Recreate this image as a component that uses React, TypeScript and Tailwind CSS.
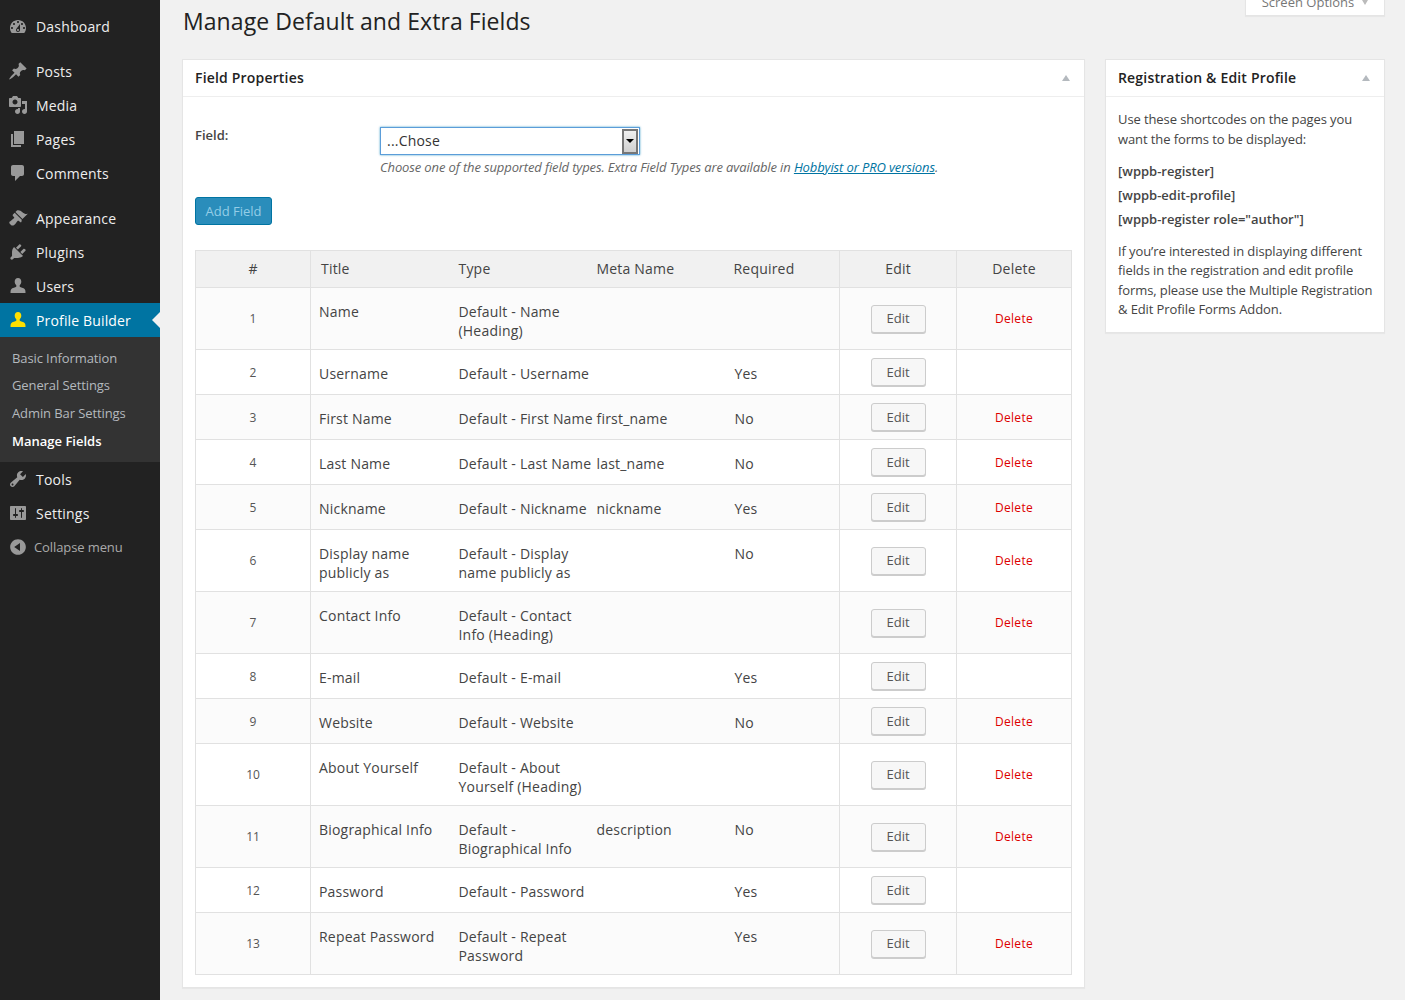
const icons = {
  dashboard:
    'M3.76 16h12.48c1.1-1.37 1.76-3.11 1.76-5 0-4.42-3.58-8-8-8s-8 3.58-8 8c0 1.89.66 3.63 1.76 5zM10 4c.55 0 1 .45 1 1s-.45 1-1 1-1-.45-1-1 .45-1 1-1zM6 6c.55 0 1 .45 1 1s-.45 1-1 1-1-.45-1-1 .45-1 1-1zm8 0c.55 0 1 .45 1 1s-.45 1-1 1-1-.45-1-1 .45-1 1-1zm-5.37 5.55L12 7v6c0 1.1-.9 2-2 2s-2-.9-2-2c0-.57.24-1.08.63-1.45zM4 10c.55 0 1 .45 1 1s-.45 1-1 1-1-.45-1-1 .45-1 1-1zm12 0c.55 0 1 .45 1 1s-.45 1-1 1-1-.45-1-1 .45-1 1-1zm-5 3c0-.55-.45-1-1-1s-1 .45-1 1 .45 1 1 1 1-.45 1-1z',
  posts:
    'M10.44 3.02l1.82-1.82 6.36 6.35-1.83 1.82c-1.05-.68-2.48-.57-3.41.36l-.75.75c-.92.93-1.04 2.35-.35 3.41l-1.83 1.82-2.41-2.41-2.8 2.79c-.42.42-3.38 2.71-3.8 2.29s1.86-3.39 2.28-3.81l2.79-2.79L4.1 9.36l1.83-1.82c1.05.69 2.48.57 3.4-.36l.75-.75c.93-.92 1.05-2.35.36-3.41z',
  media:
    'M13 11V4c0-.55-.45-1-1-1h-1.67L9 1H5L3.67 3H2c-.55 0-1 .45-1 1v7c0 .55.45 1 1 1h10c.55 0 1-.45 1-1zM7 4.5c1.38 0 2.5 1.12 2.5 2.5S8.38 9.5 7 9.5 4.5 8.38 4.5 7 5.62 4.5 7 4.5zM14 6h5v10.5c0 1.38-1.12 2.5-2.5 2.5S14 17.88 14 16.5s1.12-2.5 2.5-2.5c.17 0 .34.02.5.05V9h-3V6zm-4 8.05V13h2v3.5c0 1.38-1.12 2.5-2.5 2.5S7 17.88 7 16.5 8.12 14 9.5 14c.17 0 .34.02.5.05z',
  pages: 'M6 15V2h10v13H6zm-1 1h8v2H3V5h2v11z',
  comments: 'M5 2h9c1.1 0 2 .9 2 2v7c0 1.1-.9 2-2 2h-2l-5 5v-5H5c-1.1 0-2-.9-2-2V4c0-1.1.9-2 2-2z',
  appearance:
    'M14.48 11.06L7.41 3.99l1.5-1.5c.5-.56 2.3-.47 3.51.32 1.21.8 1.43 1.28 2.91 2.1 1.18.64 2.45 1.26 4.45.85zm-.71.71L6.7 4.7 4.93 6.47c-.39.39-.39 1.02 0 1.41l1.06 1.06c.39.39.39 1.03 0 1.42-.6.6-1.43 1.11-2.21 1.69-.35.26-.7.53-1.01.84C1.43 13.23.4 14.4 2.45 16.45c2.05 2.05 3.21 1.03 4.57-.25.31-.31.58-.66.84-1.01.57-.78 1.08-1.61 1.69-2.21.39-.39 1.02-.39 1.41 0l1.06 1.06c.39.39 1.02.39 1.41 0z',
  plugins:
    'M13.11 4.36L9.87 7.6 8 5.73l3.24-3.24c.35-.34 1.05-.2 1.56.32.52.51.66 1.21.31 1.55zm-8 1.77l.91-1.12 9.01 9.01-1.19.84c-.71.71-2.63 1.16-3.82 1.16H6.14L4.9 17.26c-.59.59-1.54.59-2.12 0-.59-.58-.59-1.53 0-2.12l1.24-1.24v-3.88c0-1.13.4-3.19 1.09-3.89zm7.26 3.97l3.24-3.24c.34-.35 1.04-.21 1.55.31.52.51.66 1.21.31 1.55l-3.24 3.25z',
  users:
    'M10 2c2.1 0 3.3 1.6 3.3 3.6 0 1.6-.7 2.9-1.6 3.7v1.3c0 .7 3 1 4.6 2.1 1 .7 1.2 2 1.2 4.3H2.5c0-2.3.2-3.6 1.2-4.3 1.6-1.1 4.6-1.4 4.6-2.1V9.3c-.9-.8-1.6-2.1-1.6-3.7C6.7 3.6 7.9 2 10 2z',
  tools:
    'M16.68 9.77c-1.34 1.34-3.3 1.67-4.95.99l-5.41 6.52c-.99.99-2.59.99-3.58 0s-.99-2.59 0-3.57l6.52-5.42c-.68-1.65-.35-3.61.99-4.95 1.28-1.28 3.12-1.62 4.72-1.06l-2.89 2.89 2.82 2.82 2.86-2.87c.53 1.58.18 3.39-1.08 4.65zM3.81 16.21c.4.39 1.04.39 1.43 0 .4-.4.4-1.04 0-1.43-.39-.4-1.03-.4-1.43 0-.39.39-.39 1.03 0 1.43z',
  settings:
    'M18 16V4c0-.55-.45-1-1-1H3c-.55 0-1 .45-1 1v12c0 .55.45 1 1 1h14c.55 0 1-.45 1-1zM8 11h1c.55 0 1 .45 1 1s-.45 1-1 1H8v1.5c0 .28-.22.5-.5.5s-.5-.22-.5-.5V13H6c-.55 0-1-.45-1-1s.45-1 1-1h1V5.5c0-.28.22-.5.5-.5s.5.22.5.5V11zm5-2h-1c-.55 0-1-.45-1-1s.45-1 1-1h1V5.5c0-.28.22-.5.5-.5s.5.22.5.5V7h1c.55 0 1 .45 1 1s-.45 1-1 1h-1v5.5c0 .28-.22.5-.5.5s-.5-.22-.5-.5V9z',
  collapse: 'M10 2.16c4.33 0 7.84 3.51 7.84 7.84s-3.51 7.84-7.84 7.84S2.16 14.33 2.16 10 5.71 2.16 10 2.16zm2 11.72V6.12L6.18 9.97z',
};

const Icon = ({ d, className = 'text-[#999]' }: { d: string; className?: string }) => (
  <svg viewBox="0 0 20 20" width="20" height="20" fill="currentColor" className={`shrink-0 ${className}`}>
    <path d={d} />
  </svg>
);

const MenuItem = ({ icon, label, className = '' }: { icon: string; label: string; className?: string }) => (
  <div className={`flex h-[34px] items-center pl-[8px] text-[14px] tracking-[0.2px] text-[#eee] ${className}`}>
    <Icon d={icon} />
    <span className="ml-[8px]">{label}</span>
  </div>
);

const Sidebar = () => (
  <aside className="h-[1000px] w-[160px] shrink-0 bg-[#222] pt-[10px]">
    <MenuItem icon={icons.dashboard} label="Dashboard" className="mb-[10px] pb-[1px]" />
    <MenuItem icon={icons.posts} label="Posts" />
    <MenuItem icon={icons.media} label="Media" />
    <MenuItem icon={icons.pages} label="Pages" />
    <MenuItem icon={icons.comments} label="Comments" className="mb-[11px]" />
    <MenuItem icon={icons.appearance} label="Appearance" />
    <MenuItem icon={icons.plugins} label="Plugins" />
    <MenuItem icon={icons.users} label="Users" />
    <div className="relative flex h-[34px] items-center bg-[#0074a2] pl-[8px] text-[14px] tracking-[0.15px] text-white">
      <Icon d={icons.users} className="text-[#ffe000]" />
      <span className="ml-[8px]">Profile Builder</span>
      <span className="absolute right-0 top-[9px] border-y-[8px] border-r-[8px] border-y-transparent border-r-[#f1f1f1]" />
    </div>
    <div className="h-[125px] bg-[#333] pt-[8px] text-[13px] tracking-[-0.1px] text-[#b4b9be]">
      <div className="pl-[12px] leading-[27px]">Basic Information</div>
      <div className="pl-[12px] leading-[27px]">General Settings</div>
      <div className="pl-[12px] leading-[28px]">Admin Bar Settings</div>
      <div className="pl-[12px] font-semibold leading-[28px] tracking-normal text-white">Manage Fields</div>
    </div>
    <MenuItem icon={icons.tools} label="Tools" />
    <MenuItem icon={icons.settings} label="Settings" />
    <div className="flex h-[34px] items-center pl-[8px] text-[13px] tracking-[-0.1px] text-[#aaa]">
      <Icon d={icons.collapse} />
      <span className="ml-[6px] pt-[2px]">Collapse menu</span>
    </div>
  </aside>
);

const PanelHead = ({ title }: { title: string }) => (
  <div className="flex h-[37px] items-center justify-between border-b border-[#eee] pl-[12px] pr-[14px]">
    <span className="pb-[2px] text-[14px] font-semibold tracking-[0.18px] text-[#222]">{title}</span>
    <span className="border-x-[4px] border-b-[6px] border-x-transparent border-b-[#b4b9be]" />
  </div>
);

type Row = { n: number; title: string[]; type: string[]; meta?: string; req?: string; del?: boolean };

const rows: Row[] = [
  { n: 1, title: ['Name'], type: ['Default - Name', '(Heading)'], del: true },
  { n: 2, title: ['Username'], type: ['Default - Username'], req: 'Yes' },
  { n: 3, title: ['First Name'], type: ['Default - First Name'], meta: 'first_name', req: 'No', del: true },
  { n: 4, title: ['Last Name'], type: ['Default - Last Name'], meta: 'last_name', req: 'No', del: true },
  { n: 5, title: ['Nickname'], type: ['Default - Nickname'], meta: 'nickname', req: 'Yes', del: true },
  { n: 6, title: ['Display name', 'publicly as'], type: ['Default - Display', 'name publicly as'], req: 'No', del: true },
  { n: 7, title: ['Contact Info'], type: ['Default - Contact', 'Info (Heading)'], del: true },
  { n: 8, title: ['E-mail'], type: ['Default - E-mail'], req: 'Yes' },
  { n: 9, title: ['Website'], type: ['Default - Website'], req: 'No', del: true },
  { n: 10, title: ['About Yourself'], type: ['Default - About', 'Yourself (Heading)'], del: true },
  { n: 11, title: ['Biographical Info'], type: ['Default -', 'Biographical Info'], meta: 'description', req: 'No', del: true },
  { n: 12, title: ['Password'], type: ['Default - Password'], req: 'Yes' },
  { n: 13, title: ['Repeat Password'], type: ['Default - Repeat', 'Password'], req: 'Yes', del: true },
];

const Lines = ({ lines }: { lines: string[] }) => (
  <>
    {lines.map((l) => (
      <div key={l} className="whitespace-nowrap">
        {l}
      </div>
    ))}
  </>
);

const FieldsTable = () => (
  <table className="w-[876px] table-fixed border-collapse border border-[#e1e1e1] text-[14px] leading-[19px] tracking-[0.2px] text-[#444]">
    <colgroup>
      <col className="w-[115px]" />
      <col className="w-[140px]" />
      <col className="w-[138px]" />
      <col className="w-[137px]" />
      <col className="w-[114px]" />
      <col className="w-[117px]" />
      <col className="w-[115px]" />
    </colgroup>
    <thead>
      <tr className="h-[37px] border-b border-[#e1e1e1] bg-[#f1f1f1]">
        <th className="border-r border-[#e1e1e1] pb-[1px] text-center font-normal">#</th>
        <th className="pb-[1px] pl-[10px] text-left font-normal">Title</th>
        <th className="pb-[1px] pl-[8px] text-left font-normal">Type</th>
        <th className="pb-[1px] pl-[8px] text-left font-normal">Meta Name</th>
        <th className="pb-[1px] pl-[8px] text-left font-normal">Required</th>
        <th className="border-x border-[#e1e1e1] pb-[1px] text-center font-normal">Edit</th>
        <th className="pb-[1px] text-center font-normal">Delete</th>
      </tr>
    </thead>
    <tbody>
      {rows.map((r) => (
        <tr key={r.n} className={`h-[45px] border-b border-[#e1e1e1] ${r.n % 2 === 1 ? 'bg-[#fbfbfb]' : 'bg-white'}`}>
          <td className="border-r border-[#e1e1e1] text-center text-[12px] tracking-normal text-[#555]">{r.n}</td>
          <td className="px-[8px] pb-[9px] pt-[14px] align-top"><Lines lines={r.title} /></td>
          <td className="px-[8px] pb-[9px] pt-[14px] align-top"><Lines lines={r.type} /></td>
          <td className="px-[8px] pb-[9px] pt-[14px] align-top">{r.meta}</td>
          <td className="pb-[9px] pl-[9px] pr-[8px] pt-[14px] align-top">{r.req}</td>
          <td className="border-x border-[#e1e1e1] text-center">
            <button className="h-[28px] w-[55px] rounded-[3px] border border-[#ccc] bg-[#f7f7f7] text-[13px] tracking-normal text-[#555] shadow-[0_1px_0_#ccc]">
              Edit
            </button>
          </td>
          <td className="text-center text-[12px] tracking-[0.3px] text-[#d00]">{r.del ? 'Delete' : ''}</td>
        </tr>
      ))}
    </tbody>
  </table>
);

export default function App() {
  return (
    <div className="flex h-[1000px] overflow-hidden bg-[#f1f1f1] font-['Open_Sans',sans-serif] text-[#444]">
      <Sidebar />
      <main className="relative min-w-0 flex-1 pl-[22px] pr-[20px]">
        <div className="absolute right-[20px] top-[-10px] flex h-[26px] w-[140px] items-center justify-center gap-[8px] border border-t-0 border-[#e5e5e5] bg-white text-[13px] text-[#777] shadow-[0_1px_1px_rgba(0,0,0,0.04)]">
          <span>Screen Options</span>
          <span className="border-x-[3px] border-t-[5px] border-x-transparent border-t-[#bbb]" />
        </div>
        <h1 className="h-[59px] pl-[1px] pt-[5px] text-[23px] leading-[33px] tracking-[0.07px] text-[#222]">Manage Default and Extra Fields</h1>
        <div className="flex items-start gap-[20px]">
          <section className="h-[929px] w-[903px] border border-[#e5e5e5] bg-white shadow-[0_1px_1px_rgba(0,0,0,0.04)]">
            <PanelHead title="Field Properties" />
            <div className="px-[12px]">
              <div className="flex pt-[30px]">
                <label className="w-[185px] text-[13px] font-semibold leading-[17px] text-[#444]">Field:</label>
                <div>
                  <div className="flex h-[28px] w-[260px] items-center justify-between border border-[#5b9dd9] pl-[6px] pr-[1px] text-[14px] tracking-[0.2px] text-[#333] shadow-[0_0_2px_rgba(30,140,190,0.8)]">
                    <span className="pb-[2px]">...Chose</span>
                    <span className="flex h-[25px] w-[16px] items-center justify-center border-2 border-[#777] bg-gradient-to-b from-[#f0f0f0] to-[#d0d0d0]">
                      <span className="border-x-[4px] border-t-[4px] border-x-transparent border-t-black" />
                    </span>
                  </div>
                  <p className="mt-[3px] text-[13px] italic leading-[19px] tracking-[-0.125px] text-[#666]">
                    Choose one of the supported field types. Extra Field Types are available in{' '}
                    <a className="text-[#0074a2] underline">Hobbyist or PRO versions</a>.
                  </p>
                </div>
              </div>
              <button className="mt-[20px] block h-[28px] w-[77px] rounded-[3px] border border-[#0074a2] bg-[#2a8dbb] pt-[1px] text-[13px] text-[#94cde7]">
                Add Field
              </button>
              <div className="mt-[25px]">
                <FieldsTable />
              </div>
            </div>
          </section>
          <section className="h-[274px] w-[280px] border border-[#e5e5e5] bg-white shadow-[0_1px_1px_rgba(0,0,0,0.04)]">
            <PanelHead title="Registration & Edit Profile" />
            <div className="px-[12px] pt-[13px] text-[13px] leading-[19.5px] tracking-[-0.1px] text-[#444]">
              <p>Use these shortcodes on the pages you want the forms to be displayed:</p>
              <p className="mt-[13px] font-semibold tracking-normal">[wppb-register]</p>
              <p className="mt-[4.5px] font-semibold tracking-normal">[wppb-edit-profile]</p>
              <p className="mt-[4.5px] font-semibold tracking-normal">{'[wppb-register role="author"]'}</p>
              <p className="-mr-[8px] mt-[12px]">
                If you&rsquo;re interested in displaying different fields in the registration and edit profile forms, please use the Multiple Registration &amp; Edit Profile Forms Addon.
              </p>
            </div>
          </section>
        </div>
      </main>
    </div>
  );
}
